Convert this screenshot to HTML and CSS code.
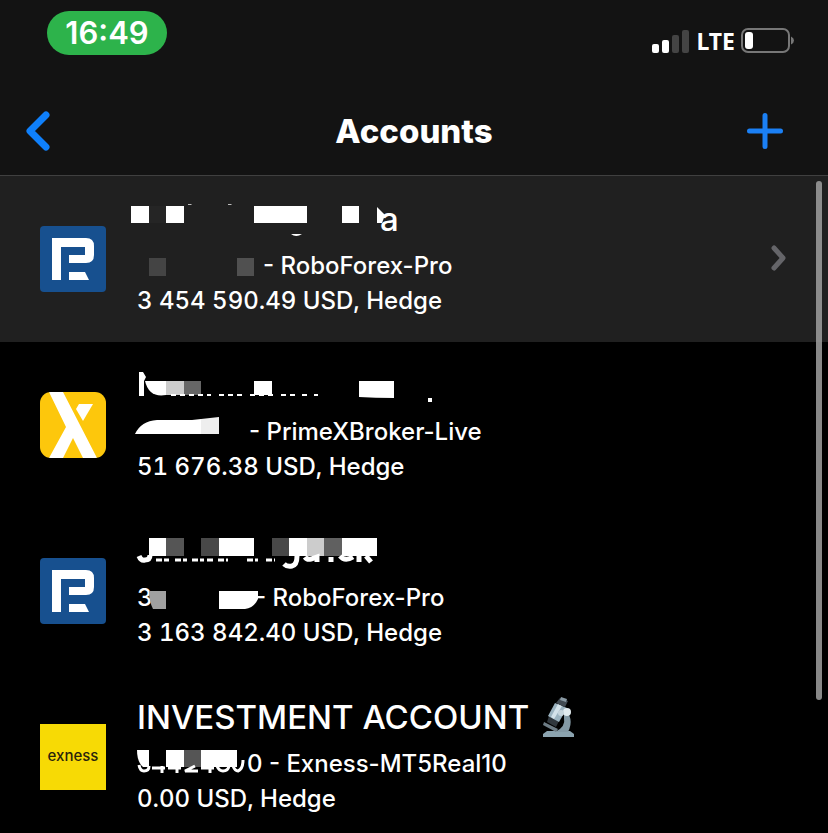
FILE: index.html
```html
<!DOCTYPE html>
<html lang="en">
<head>
  <meta charset="UTF-8">
  <meta name="viewport" content="width=device-width, initial-scale=1.0">
  <title>Accounts</title>
  <link rel="stylesheet" href="styles.css">
</head>
<body>
  <header class="header">
    <div class="status-bar">
      <span class="clock">16:49</span>
      <div class="status-icons">
        <svg width="38" height="24" viewBox="0 0 38 24">
          <rect x="0" y="15" width="7" height="9" rx="2" fill="#fff"/>
          <rect x="10" y="11" width="7" height="13" rx="2" fill="#fff"/>
          <rect x="20" y="6" width="7" height="18" rx="2" fill="#444"/>
          <rect x="30" y="1" width="7" height="23" rx="2" fill="#444"/>
        </svg>
        <span class="network">LTE</span>
        <svg width="54" height="26" viewBox="0 0 54 26">
          <rect x="1" y="1" width="47" height="23" rx="6" fill="none" stroke="#777" stroke-width="2"/>
          <rect x="4" y="4" width="8" height="17" rx="3" fill="#fff"/>
          <path d="M50 8.500q3 1.500 3 4t-3 4z" fill="#777"/>
        </svg>
      </div>
    </div>
    <div class="nav-bar">
      <button class="nav-button" aria-label="Back">
        <svg width="26" height="42" viewBox="0 0 26 42">
          <path d="M22 5L6 21L22 37" fill="none" stroke="#0f80fb" stroke-width="7" stroke-linecap="round" stroke-linejoin="round"/>
        </svg>
      </button>
      <h1>Accounts</h1>
      <button class="nav-button add" aria-label="Add account">
        <svg width="36" height="36" viewBox="0 0 36 36">
          <path d="M18 2.500V33.500M2.500 18H33.500" stroke="#1b80f5" stroke-width="5" stroke-linecap="round"/>
        </svg>
      </button>
    </div>
  </header>

  <main class="accounts">
    <a href="#" class="account selected">
      <svg class="logo" viewBox="0 0 66 66">
        <rect width="66" height="66" rx="4" fill="#17508f"/>
        <path d="M12 12H46Q54 12 54 20V29Q54 37 46 37H29V29H45V21H21V54H12Z" fill="#fff"/>
        <path d="M29 46H45L49 54H29Z" fill="#fff"/>
      </svg>
      <div class="details">
        <h2>
          <svg width="243" height="42" fill="#fff" aria-hidden="true">
            <rect x="-6" y="8" width="18" height="17"/>
            <rect x="12" y="8" width="17" height="17" fill="#252525"/>
            <rect x="29" y="8" width="18" height="17"/>
            <path d="M51 6h4l-1 1h-3zM91 6h4l-1 1h-3z" fill="#bbb"/>
            <rect x="117" y="8" width="53" height="17"/>
            <rect x="205" y="8" width="17" height="17"/>
            <path d="M240 9L248 17L245 25H240Z"/>
            <path d="M154 36H165Q159 40 154 36Z"/>
          </svg>
          <span>a</span>
        </h2>
        <p>
          <svg width="126" height="35" aria-hidden="true">
            <rect x="12" y="10" width="17" height="18" fill="#444"/>
            <rect x="100" y="10" width="17" height="18" fill="#505050"/>
          </svg>
          <span>- RoboForex-Pro</span>
        </p>
        <p class="balance">3 454 590.49 USD, Hedge</p>
      </div>
      <svg class="chevron" width="18" height="28" viewBox="0 0 18 28">
        <path d="M4 3L13 13L4 23" fill="none" stroke="#656569" stroke-width="5" stroke-linecap="round" stroke-linejoin="round"/>
      </svg>
    </a>

    <a href="#" class="account">
      <svg class="logo rounded" viewBox="0 0 66 66">
        <rect width="66" height="66" fill="#fdc70c"/>
        <path d="M9 0H23L57 66H43L33 46L23 66H9L26 35Z" fill="#fff"/>
        <path d="M39 12H53L43 29L36 17Z" fill="#fff"/>
      </svg>
      <div class="details">
        <h2>
          <svg width="300" height="42" fill="#fff" aria-hidden="true">
            <path d="M2 8H6L9 13L7 17V32H2Z"/>
            <path d="M8 17H29V31Q12 34 8 17Z"/>
            <rect x="29" y="17" width="18" height="14" fill="#ccc"/>
            <rect x="47" y="17" width="17" height="14" fill="#666"/>
            <rect x="117" y="17" width="18" height="14"/>
            <path d="M222 17H257V34Q238 34 222 33Z"/>
            <rect x="291" y="34" width="4" height="4"/>
            <path d="M34 31H74M82 31H108M113 31H138M144 31H160M165 31H170M177 31H181" stroke="#fff" stroke-width="2" stroke-dasharray="5 4" fill="none"/>
          </svg>
        </h2>
        <p>
          <svg width="112" height="35" aria-hidden="true">
            <path d="M-2 20Q4 7 20 6H55L64 5V20Z" fill="#fff"/>
            <path d="M64 5L82 3V20H64Z" fill="#eee"/>
          </svg>
          <span>- PrimeXBroker-Live</span>
        </p>
        <p class="balance">51 676.38 USD, Hedge</p>
      </div>
    </a>

    <a href="#" class="account">
      <svg class="logo" viewBox="0 0 66 66">
        <rect width="66" height="66" rx="4" fill="#17508f"/>
        <path d="M12 12H46Q54 12 54 20V29Q54 37 46 37H29V29H45V21H21V54H12Z" fill="#fff"/>
        <path d="M29 46H45L49 54H29Z" fill="#fff"/>
      </svg>
      <div class="details">
        <h2>
          <svg width="242" height="42" fill="#fff" aria-hidden="true">
            <rect x="12" y="8" width="17" height="18"/>
            <rect x="29" y="8" width="18" height="18" fill="#555"/>
            <rect x="64" y="8" width="18" height="18" fill="#484848"/>
            <rect x="82" y="8" width="35" height="18"/>
            <rect x="135" y="8" width="17" height="18" fill="#484848"/>
            <rect x="152" y="8" width="18" height="18"/>
            <rect x="170" y="8" width="17" height="18" fill="#ccc"/>
            <rect x="187" y="8" width="18" height="18" fill="#606060"/>
            <rect x="205" y="8" width="35" height="18"/>
            <g fill="none" stroke="#fff" stroke-width="5">
              <path d="M2 26Q4 31 8 30Q13 30 13 25"/>
              <path d="M147 34Q150 37 155 36Q160 35 160 26"/>
              <path d="M168 27Q170 30 174 29L180 27V32M194 27V32M203 26Q208 32 216 27M222 26V32M229 26L234 32"/>
              <path d="M19 30H32M38 30H50M55 30H67M70 30H76M81 30H91M110 30H121M129 30H138" stroke-width="3" stroke-dasharray="6 2"/>
            </g>
          </svg>
        </h2>
        <p>
          <span>3</span>
          <svg width="103" height="35" aria-hidden="true">
            <path d="M-3 11H14V29H1Q-3 21 -3 11Z" fill="#a0a0a0"/>
            <path d="M67 11H106V19Q102 28 93 29H67Z" fill="#fff"/>
          </svg>
          <span>- RoboForex-Pro</span>
        </p>
        <p class="balance">3 163 842.40 USD, Hedge</p>
      </div>
    </a>

    <a href="#" class="account">
      <div class="logo exness">exness</div>
      <div class="details">
        <h2>
          <span>INVESTMENT ACCOUNT</span>
          <svg class="microscope" width="34" height="42" viewBox="0 0 34 42">
            <path d="M2 38L6 35H29L33 38V41H2Z" fill="#8ba3af"/>
            <path d="M23 13Q34 22 27 36H14Q25 31 23 22Z" fill="#8399a5"/>
            <path d="M3 26L17 33L15 36L2 29Z" fill="#6e7d86"/>
            <path d="M8 20L18 25L15 31L6 26Z" fill="#30373d"/>
            <path d="M14 7L26 12L18 26L7 20Z" fill="#9bb3c0"/>
            <path d="M17 8L21 10L13 23L10 21Z" fill="#d3e2ea"/>
            <path d="M19 2L27 5L24 11L15 7Z" fill="#414a52"/>
            <path d="M20 1L26 3L25 6L19 4Z" fill="#8999a3"/>
            <circle cx="26" cy="16" r="4" fill="#e1ebef"/>
            <circle cx="20" cy="17" r="3" fill="#c6d5dd"/>
          </svg>
        </h2>
        <p>
          <svg width="110" height="35" fill="#fff" aria-hidden="true">
            <path d="M0 4H12V21H6Q0 16 0 4Z"/>
            <rect x="29" y="4" width="18" height="17"/>
            <rect x="47" y="4" width="17" height="17" fill="#555"/>
            <rect x="64" y="4" width="36" height="17"/>
            <g fill="none" stroke="#fff" stroke-width="3">
              <path d="M2 19Q3 25 7 25Q12 25 12 20M15 22H28M25 20V27M31 22H44M40 20V27M58 20L48 25H61M64 22H77M73 20V27M80 20Q82 25 86 25Q91 25 92 20M96 20Q98 25 101 25Q106 23 106 14"/>
            </g>
          </svg>
          <span>0 - Exness-MT5Real10</span>
        </p>
        <p class="balance">0.00 USD, Hedge</p>
      </div>
    </a>
    <div class="scrollbar"></div>
  </main>
</body>
</html>
```
FILE: styles.css
```css
* {
  margin: 0;
  padding: 0;
  box-sizing: border-box;
}

body {
  height: 100vh;
  display: flex;
  flex-direction: column;
  overflow: hidden;
  background-color: #000;
  color: #fff;
  font-family: Inter, "Liberation Sans", sans-serif;
}

.header {
  background-color: #131313;
  border-bottom: 1px solid #404040;
}

.status-bar {
  display: flex;
  justify-content: space-between;
  align-items: flex-start;
  height: 87px;
  padding: 11px 33px 0 47px;
}

.clock {
  width: 120px;
  border-radius: 22px;
  background-color: #2db34b;
  font-size: 31px;
  font-weight: 600;
  line-height: 44px;
  text-align: center;
}

.status-icons {
  display: flex;
  align-items: center;
  gap: 6px;
  padding-top: 17px;
}

.network {
  font-family: "Noto Sans", sans-serif;
  font-size: 23px;
  font-weight: 700;
  line-height: 26px;
}

.nav-bar {
  display: grid;
  grid-template-columns: 1fr auto 1fr;
  align-items: center;
  height: 88px;
  padding: 0 24px;
}

.nav-bar h1 {
  font-size: 33px;
  font-weight: 800;
}

.nav-button {
  display: flex;
  justify-self: start;
  border: none;
  background: none;
  cursor: pointer;
}

.nav-button.add {
  justify-self: end;
  margin-right: 21px;
}

.accounts {
  position: relative;
  flex: 1;
  min-height: 0;
}

.account {
  display: flex;
  align-items: center;
  height: 166px;
  padding: 0 40px;
  color: #fff;
  text-decoration: none;
}

.account.selected {
  background-color: #202020;
}

.logo {
  flex: none;
  width: 66px;
  height: 66px;
  margin-right: 31px;
}

.logo.rounded {
  border-radius: 11px;
}

.exness {
  background-color: #f7da05;
  color: #29230c;
  font-size: 15px;
  font-weight: 500;
  line-height: 64px;
  text-align: center;
}

.details {
  flex: 1;
  padding-bottom: 2px;
}

.details h2 {
  display: flex;
  height: 42px;
  margin-bottom: 8px;
  font-size: 33px;
  font-weight: 500;
  line-height: 42px;
}

.details p {
  display: flex;
  height: 35px;
  font-size: 24px;
  font-weight: 500;
  line-height: 35px;
  white-space: pre;
}

.details .balance {
  font-variant-numeric: tabular-nums;
}

.details svg {
  flex: none;
  overflow: visible;
}

.details .microscope {
  margin-left: 12px;
}

.scrollbar {
  position: absolute;
  top: 5px;
  right: 6px;
  width: 6px;
  height: 79%;
  border-radius: 3px;
  background-color: rgba(160, 160, 160, 0.85);
}
```
